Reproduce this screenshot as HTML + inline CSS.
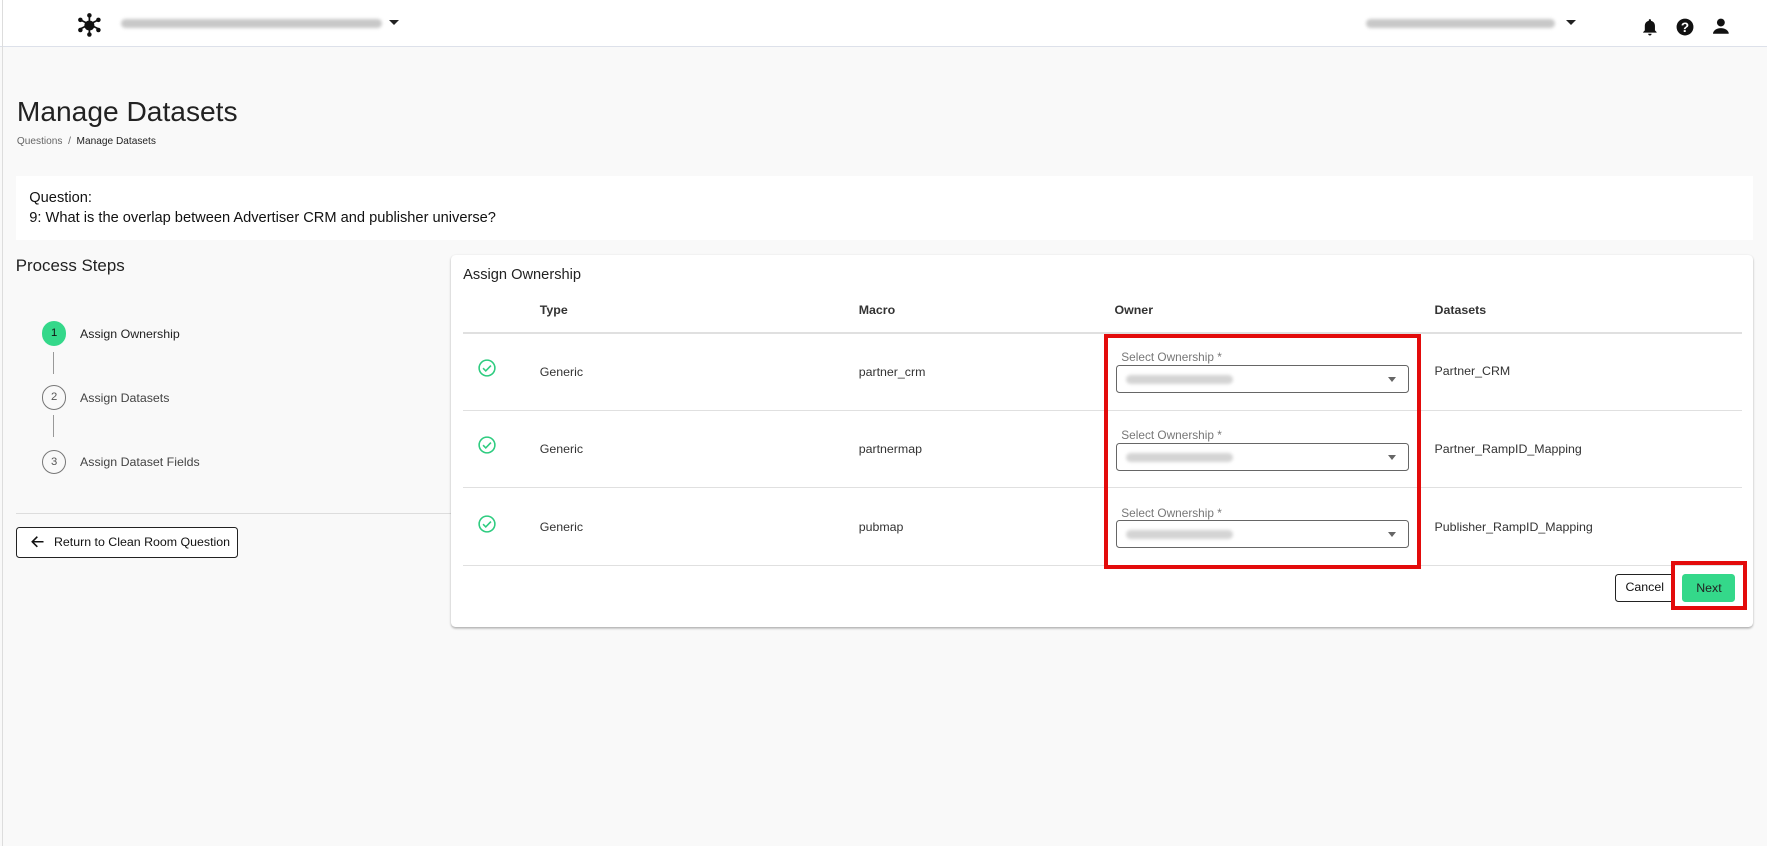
<!DOCTYPE html>
<html><head><meta charset="utf-8"><style>
*{box-sizing:border-box;margin:0;padding:0}
html,body{width:1767px;height:846px;overflow:hidden;background:#f9f9f9}
#w{zoom:1.12691;position:relative;width:1568px;height:751px;font-family:"Liberation Sans",sans-serif;color:#222}
.a{position:absolute;white-space:nowrap}
.blur{position:absolute;height:8px;border-radius:4px;background:#c8c8c8;filter:blur(1.5px)}
.sel{position:absolute;left:990px;width:260px;height:25px;border:1px solid #666;border-radius:3px;background:#fff}
.sel .blur{left:8px;top:8px;width:95px;background:#d4d4d4}
.sel i{position:absolute;right:10px;top:10px;border-left:4px solid transparent;border-right:4px solid transparent;border-top:5px solid #666}
.lab{position:absolute;left:995px;font-size:10.5px;color:#777}
.cell{position:absolute;font-size:11px;color:#333}
.hd{position:absolute;top:269px;font-size:11px;color:#333;font-weight:bold}
.hr{position:absolute;left:411px;width:1135px;height:1px;background:#e0e0e0}
</style></head><body><div id="w">
<div class="a" style="left:0;top:0;width:1568px;height:42px;background:#fff;border-bottom:1px solid #dde1ea"></div>
<div class="a" style="left:2px;top:0;width:1px;height:751px;background:#ddd"></div>
<svg class="a" style="left:68px;top:11px" width="22" height="22" viewBox="0 0 22 22"><g stroke="#111" stroke-width="1.5"><line x1="11" y1="3" x2="11" y2="19"/><line x1="3" y1="7" x2="19" y2="15"/><line x1="3" y1="15" x2="19" y2="7"/></g><circle cx="11" cy="12" r="4.5" fill="#111"/><g fill="#111"><circle cx="11" cy="3" r="2"/><circle cx="11" cy="20" r="2"/><circle cx="3" cy="7" r="2"/><circle cx="19" cy="7" r="2"/><circle cx="3" cy="16" r="2"/><circle cx="19" cy="16" r="2"/></g></svg>
<div class="blur" style="left:107px;top:17px;width:232px"></div>
<div class="a" style="left:345px;top:18px;border-left:4.5px solid transparent;border-right:4.5px solid transparent;border-top:5px solid #222"></div>
<div class="blur" style="left:1212px;top:17px;width:168px"></div>
<div class="a" style="left:1390px;top:18px;border-left:4.5px solid transparent;border-right:4.5px solid transparent;border-top:5px solid #222"></div>
<svg class="a" style="left:1457px;top:16px" width="14" height="16" viewBox="0 0 14 16"><path d="M7 1c-.7 0-1 .5-1 1v.5C3.5 3 2.5 5 2.5 7v4L1 12.5V13h12v-.5L11.5 11V7c0-2-1-4-3.5-4.5V2c0-.5-.3-1-1-1z M5.5 14a1.5 1.5 0 003 0z" fill="#111"/></svg>
<svg class="a" style="left:1487px;top:16px" width="16" height="16" viewBox="0 0 16 16"><circle cx="8" cy="8" r="7.5" fill="#111"/><text x="8" y="12.5" font-size="12" font-weight="bold" fill="#fff" text-anchor="middle" font-family="Liberation Sans">?</text></svg>
<svg class="a" style="left:1520px;top:16px" width="14" height="15" viewBox="0 0 14 15"><circle cx="7" cy="4" r="3.5" fill="#111"/><path d="M0 14c0-3 3.5-5 7-5s7 2 7 5z" fill="#111"/></svg>

<div class="a" style="left:15px;top:84px;font-size:25px;color:#222">Manage Datasets</div>
<div class="a" style="left:15px;top:121px;font-size:9px;color:#666">Questions &nbsp;/&nbsp; <span style="color:#222">Manage Datasets</span></div>

<div class="a" style="left:14px;top:156px;width:1542px;height:57px;background:#fff"></div>
<div class="a" style="left:26px;top:167px;font-size:13px;color:#111;line-height:18px">Question:<br>9: What is the overlap between Advertiser CRM and publisher universe?</div>

<div class="a" style="left:14px;top:227px;font-size:15px;color:#222">Process Steps</div>
<div class="a" style="left:37px;top:285px;width:22px;height:22px;border-radius:50%;background:#34d88a;font-size:10px;text-align:center;line-height:22px;color:#111">1</div>
<div class="a" style="left:71px;top:290px;font-size:11px;color:#222">Assign Ownership</div>
<div class="a" style="left:47px;top:312px;width:1px;height:20px;background:#999"></div>
<div class="a" style="left:37px;top:342px;width:22px;height:22px;border-radius:50%;border:1px solid #777;font-size:10px;text-align:center;line-height:20px;color:#555">2</div>
<div class="a" style="left:71px;top:347px;font-size:11px;color:#444">Assign Datasets</div>
<div class="a" style="left:47px;top:368px;width:1px;height:20px;background:#999"></div>
<div class="a" style="left:37px;top:399px;width:22px;height:22px;border-radius:50%;border:1px solid #777;font-size:10px;text-align:center;line-height:20px;color:#555">3</div>
<div class="a" style="left:71px;top:404px;font-size:11px;color:#444">Assign Dataset Fields</div>
<div class="a" style="left:14px;top:455px;width:386px;height:1px;background:#ddd"></div>
<div class="a" style="left:14px;top:468px;width:197px;height:27px;border:1px solid #222;border-radius:3px;background:#fff;font-size:11px;color:#111;line-height:25px;padding-left:33px">Return to Clean Room Question</div>
<svg class="a" style="left:27px;top:475px" width="13" height="12" viewBox="0 0 13 12"><path d="M12 6H2M6.5 1.5L2 6l4.5 4.5" stroke="#111" stroke-width="1.4" fill="none"/></svg>

<div class="a" style="left:400px;top:226px;width:1156px;height:330px;background:#fff;border-radius:4px;box-shadow:0 1px 2px rgba(0,0,0,.3)"></div>
<div class="a" style="left:411px;top:237px;font-size:13px;color:#222">Assign Ownership</div>
<div class="hd" style="left:479px">Type</div><div class="hd" style="left:762px">Macro</div><div class="hd" style="left:989px">Owner</div><div class="hd" style="left:1273px">Datasets</div>
<div class="hr" style="top:295px"></div><div class="hr" style="top:364px"></div><div class="hr" style="top:432px"></div><div class="hr" style="top:501px"></div>

<svg class="a" style="left:424px;top:319px" width="16" height="16" viewBox="0 0 16 16"><circle cx="8" cy="8" r="7" stroke="#2ecc80" stroke-width="1.4" fill="none"/><path d="M4.5 8.2l2.4 2.4 4.6-4.8" stroke="#2ecc80" stroke-width="1.4" fill="none"/></svg>
<svg class="a" style="left:424px;top:387px" width="16" height="16" viewBox="0 0 16 16"><circle cx="8" cy="8" r="7" stroke="#2ecc80" stroke-width="1.4" fill="none"/><path d="M4.5 8.2l2.4 2.4 4.6-4.8" stroke="#2ecc80" stroke-width="1.4" fill="none"/></svg>
<svg class="a" style="left:424px;top:457px" width="16" height="16" viewBox="0 0 16 16"><circle cx="8" cy="8" r="7" stroke="#2ecc80" stroke-width="1.4" fill="none"/><path d="M4.5 8.2l2.4 2.4 4.6-4.8" stroke="#2ecc80" stroke-width="1.4" fill="none"/></svg>

<div class="cell" style="left:479px;top:324px">Generic</div><div class="cell" style="left:762px;top:324px">partner_crm</div><div class="cell" style="left:1273px;top:323px">Partner_CRM</div>
<div class="cell" style="left:479px;top:392px">Generic</div><div class="cell" style="left:762px;top:392px">partnermap</div><div class="cell" style="left:1273px;top:392px">Partner_RampID_Mapping</div>
<div class="cell" style="left:479px;top:461px">Generic</div><div class="cell" style="left:762px;top:461px">pubmap</div><div class="cell" style="left:1273px;top:461px">Publisher_RampID_Mapping</div>

<div class="lab" style="top:311px">Select Ownership *</div><div class="sel" style="top:324px"><div class="blur"></div><i></i></div>
<div class="lab" style="top:380px">Select Ownership *</div><div class="sel" style="top:393px"><div class="blur"></div><i></i></div>
<div class="lab" style="top:449px">Select Ownership *</div><div class="sel" style="top:461px"><div class="blur"></div><i></i></div>
<div class="a" style="left:980px;top:296px;width:281px;height:209px;border:4px solid #e30b0b"></div>

<div class="a" style="left:1433px;top:509px;width:53px;height:25px;border:1px solid #222;border-radius:3px;font-size:11px;text-align:center;line-height:23px;color:#111;background:#fff">Cancel</div>
<div class="a" style="left:1493px;top:509px;width:47px;height:25px;border-radius:3px;background:#34d88a;font-size:11px;text-align:center;line-height:25px;color:#222">Next</div>
<div class="a" style="left:1483px;top:498px;width:67px;height:43px;border:4px solid #e30b0b"></div>
</div></body></html>
